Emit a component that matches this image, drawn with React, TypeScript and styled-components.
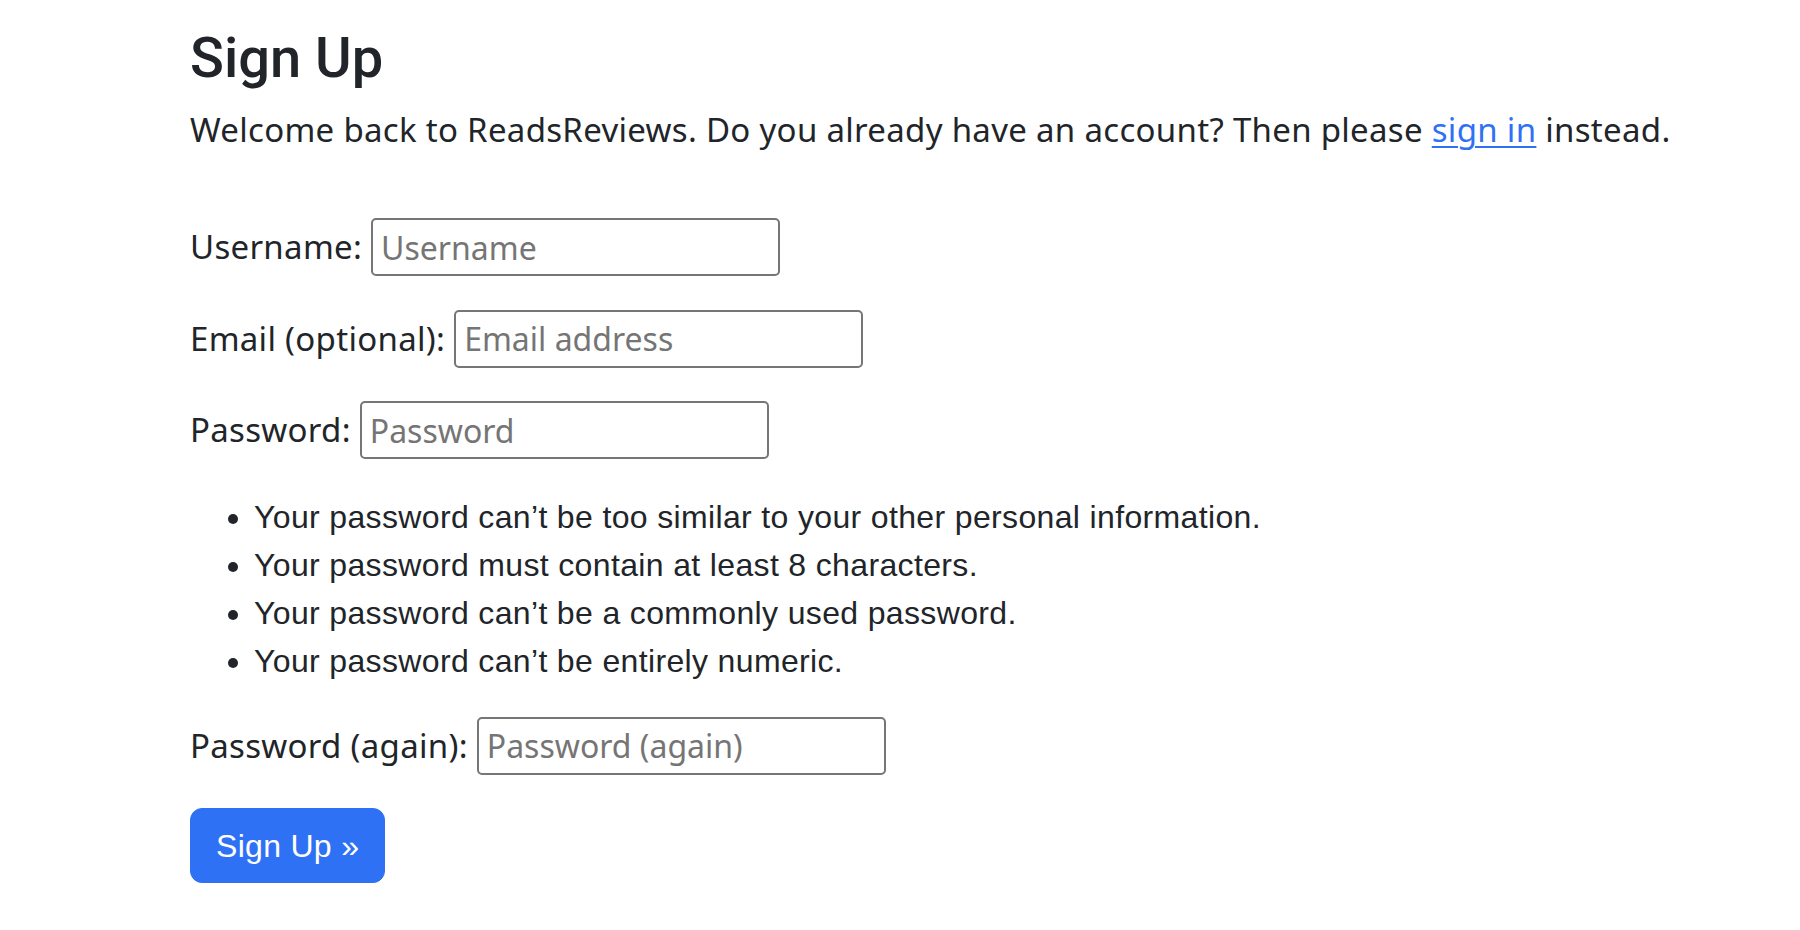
import React from "react";
import styled, { createGlobalStyle } from "styled-components";

const GlobalStyle = createGlobalStyle`
  html, body {
    margin: 0;
    padding: 0;
    background: #ffffff;
  }
  * { box-sizing: border-box; }
`;

const Page = styled.main`
  padding: 25px 60px 40px 190px;
  color: #212529;
`;

const Title = styled.h1`
  margin: 0 0 14px;
  font-family: Roboto, "Liberation Sans", sans-serif;
  font-weight: 500;
  font-size: 56px;
  line-height: 1.2;
  color: #212529;
`;

const Intro = styled.p`
  margin: 0 0 64px;
  font-family: "Noto Sans", "Open Sans", sans-serif;
  font-size: 33px;
  letter-spacing: 0.3px;
  line-height: 48px;
`;

const TextLink = styled.a`
  color: #2f71f5;
  text-decoration: underline;
  text-decoration-thickness: 2px;
  text-underline-offset: 4px;
`;

const Form = styled.form`
  display: flex;
  flex-direction: column;
  align-items: flex-start;
`;

const FieldRow = styled.div`
  display: flex;
  align-items: center;
  gap: 9px;
  margin-bottom: 33.5px;
`;

const Label = styled.label`
  font-family: "Noto Sans", "Open Sans", sans-serif;
  font-size: 33px;
  letter-spacing: 0.3px;
  line-height: 48px;
  color: #212529;
  white-space: nowrap;
`;

const TextInput = styled.input`
  width: 409px;
  height: 58px;
  border: 2px solid #767676;
  border-radius: 5px;
  padding: 0 8px;
  font-family: "Noto Sans", "Open Sans", sans-serif;
  font-size: 32px;
  color: #212529;
  background: #ffffff;
  outline: none;

  &::placeholder {
    color: #757575;
  }
`;

const HelpList = styled.ul`
  margin: 0 0 32px;
  padding-left: 64px;
  font-family: "Liberation Sans", Arial, sans-serif;
  font-size: 32px;
  letter-spacing: 0.35px;
  line-height: 48px;
  color: #212529;
`;

const SubmitButton = styled.button`
  background: #2f71f5;
  color: #ffffff;
  border: 1px solid #2f71f5;
  border-radius: 12px;
  padding: 12.5px 25px;
  font-family: "Liberation Sans", Arial, sans-serif;
  font-size: 32px;
  letter-spacing: 0.3px;
  line-height: 48px;
  cursor: pointer;
`;

const fields = [
  { id: "username", label: "Username:", placeholder: "Username", type: "text" },
  { id: "email", label: "Email (optional):", placeholder: "Email address", type: "email" },
  { id: "password1", label: "Password:", placeholder: "Password", type: "password" },
];

const rules = [
  "Your password can’t be too similar to your other personal information.",
  "Your password must contain at least 8 characters.",
  "Your password can’t be a commonly used password.",
  "Your password can’t be entirely numeric.",
];

export default function App() {
  return (
    <>
      <GlobalStyle />
      <Page>
        <Title>Sign Up</Title>
        <Intro>
          Welcome back to ReadsReviews. Do you already have an account? Then please{" "}
          <TextLink href="#">sign in</TextLink> instead.
        </Intro>
        <Form onSubmit={(e) => e.preventDefault()}>
          {fields.map((f) => (
            <FieldRow key={f.id}>
              <Label htmlFor={f.id}>{f.label}</Label>
              <TextInput id={f.id} type={f.type} placeholder={f.placeholder} />
            </FieldRow>
          ))}
          <HelpList>
            {rules.map((r) => (
              <li key={r}>{r}</li>
            ))}
          </HelpList>
          <FieldRow>
            <Label htmlFor="password2">Password (again):</Label>
            <TextInput id="password2" type="password" placeholder="Password (again)" />
          </FieldRow>
          <SubmitButton type="submit">Sign Up »</SubmitButton>
        </Form>
      </Page>
    </>
  );
}
